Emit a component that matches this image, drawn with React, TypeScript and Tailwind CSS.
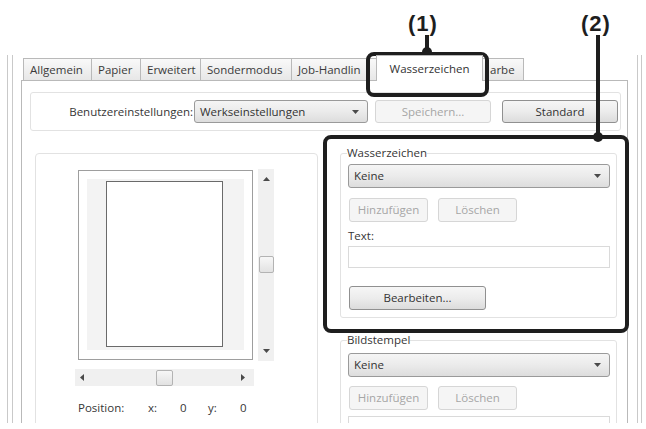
import React from "react";

function Arrow({ dir, className }: { dir: "up" | "down" | "left" | "right"; className?: string }) {
  const pts: Record<string, string> = {
    down: "0,0 7,0 3.5,4",
    up: "0,4 7,4 3.5,0",
    left: "4,0 4,7 0,3.5",
    right: "0,0 0,7 4,3.5",
  };
  const vertical = dir === "up" || dir === "down";
  return (
    <svg
      className={className}
      width={vertical ? 7 : 4}
      height={vertical ? 4 : 7}
      viewBox={vertical ? "0 0 7 4" : "0 0 4 7"}
    >
      <polygon points={pts[dir]} fill="#4a4a4a" />
    </svg>
  );
}

function Tab({ children, className }: { children: React.ReactNode; className: string }) {
  return (
    <div
      className={
        "h-[22px] -mr-px shrink-0 border border-b-0 border-[#b9b9b9] bg-linear-to-b from-[#f9f9f9] to-[#e7e7e7] flex items-center px-[6px] overflow-hidden whitespace-nowrap text-[#3a3a3a] " +
        className
      }
    >
      {children}
    </div>
  );
}

function Btn({ label, className, disabled }: { label: string; className: string; disabled?: boolean }) {
  return disabled ? (
    <div
      className={
        "shrink-0 flex items-center justify-center rounded-[3px] border border-[#d6d6d6] bg-[#f5f5f5] text-[#a6a6a6] " +
        className
      }
    >
      {label}
    </div>
  ) : (
    <div
      className={
        "shrink-0 flex items-center justify-center rounded-[3px] border border-[#909090] bg-linear-to-b from-[#f6f6f6] via-[#ececec] to-[#dcdcdc] text-[#333] " +
        className
      }
    >
      {label}
    </div>
  );
}

function Combo({ value, className }: { value: string; className: string }) {
  return (
    <div
      className={
        "shrink-0 flex items-center justify-between rounded-[3px] border border-[#9a9a9a] bg-linear-to-b from-[#f5f5f5] via-[#ebebeb] to-[#dddddd] pl-[5px] pr-[8px] text-[#333] " +
        className
      }
    >
      <span>{value}</span>
      <Arrow dir="down" />
    </div>
  );
}

export default function App() {
  return (
    <div className="relative w-[646px] h-[429px] bg-white overflow-hidden font-['Open_Sans','Noto_Sans',sans-serif] text-[11.5px] leading-[14px] text-[#363636]">
      <div className="h-[55px]" />
      {/* window frame */}
      <div className="ml-[7px] w-[635px] h-[368px] border-x border-[#c9c9c9] overflow-hidden">
        <div className="ml-[4px] w-[626px] h-full border-x border-[#c9c9c9] bg-white pl-[8px]">
          {/* tab control */}
          <div className="w-[607px]">
            <div className="flex items-end h-[25px] pl-[2px]">
              <Tab className="w-[69px]">Allgemein</Tab>
              <Tab className="w-[50px]">Papier</Tab>
              <Tab className="w-[61px]">Erweitert</Tab>
              <Tab className="w-[92px]">Sondermodus</Tab>
              <Tab className="w-[88px]">Job-Handlin</Tab>
              <div className="relative z-10 -ml-[2px] -mr-[3px] mb-[-1px] h-[26px] w-[107px] shrink-0 border border-b-0 border-[#b9b9b9] bg-white flex items-center justify-center text-[#333]">
                Wasserzeichen
              </div>
              <Tab className="w-[44px] pl-[9px]">arbe</Tab>
            </div>
            {/* pane */}
            <div className="border border-[#b9b9b9] bg-white h-[400px] px-[8px]">
              {/* Benutzereinstellungen group */}
              <div className="mt-[11px] h-[39px] w-[591px] rounded-[3px] border border-[#e2e2e2] pt-[7px] flex items-start">
                <div className="w-[163px] h-[23px] flex items-center justify-end pr-[1px]">
                  Benutzereinstellungen:
                </div>
                <Combo value="Werkseinstellungen" className="w-[174px] h-[23px]" />
                <Btn label="Speichern..." disabled className="ml-[7px] w-[116px] h-[23px]" />
                <Btn label="Standard" className="ml-[11px] w-[116px] h-[23px]" />
              </div>

              {/* main row */}
              <div className="mt-[16px] flex items-start">
                {/* preview box */}
                <div className="ml-[5px] mt-[6px] w-[283px] h-[300px] rounded-[4px] border border-[#e2e2e2] pt-[16px] pl-[42px]">
                  <div className="flex items-start">
                    <div className="w-[175px] h-[190px] border border-[#9e9e9e] pt-[8px] pl-[8px]">
                      <div className="w-[157px] h-[171px] bg-[#f3f3f3] pt-[2px] pl-[19px]">
                        <div className="w-[117px] h-[166px] border border-[#6a6a6a] bg-white" />
                      </div>
                    </div>
                    <div className="ml-[5px] -mt-px w-[16px] h-[192px] bg-[#f0f0f0] flex flex-col items-center">
                      <Arrow dir="up" className="mt-[8px]" />
                      <div className="mt-[75px] w-[15px] h-[17px] rounded-[2px] border border-[#b3b3b3] bg-linear-to-b from-[#f7f7f7] to-[#e2e2e2]" />
                      <Arrow dir="down" className="mt-[76px]" />
                    </div>
                  </div>
                  <div className="-ml-[3px] mt-[8px] w-[179px] h-[17px] bg-[#f0f0f0] flex items-center">
                    <Arrow dir="left" className="ml-[5px]" />
                    <div className="ml-[72px] w-[17px] h-[16px] rounded-[2px] border border-[#b3b3b3] bg-linear-to-b from-[#f7f7f7] to-[#e2e2e2]" />
                    <Arrow dir="right" className="ml-[68px]" />
                  </div>
                  <div className="mt-[15px] flex">
                    <span className="w-[70px]">Position:</span>
                    <span className="w-[32px]">x:</span>
                    <span className="w-[28px]">0</span>
                    <span className="w-[32px]">y:</span>
                    <span>0</span>
                  </div>
                </div>

                {/* right column */}
                <div className="ml-[22px] w-[277px]">
                  <fieldset className="rounded-[3px] border border-[#e2e2e2] px-[6px] pb-[7px]">
                    <legend className="leading-[12px]">Wasserzeichen</legend>
                    <Combo value="Keine" className="mt-[5px] ml-px w-[262px] h-[24px]" />
                    <div className="mt-[10px] flex">
                      <Btn label="Hinzufügen" disabled className="ml-[2px] w-[79px] h-[24px]" />
                      <Btn label="Löschen" disabled className="ml-[10px] w-[79px] h-[24px]" />
                    </div>
                    <div className="mt-[7px] ml-px">Text:</div>
                    <div className="mt-[3px] ml-px w-[262px] h-[22px] border border-[#dadada] bg-white" />
                    <Btn label="Bearbeiten..." className="mt-[18px] ml-[2px] w-[137px] h-[24px]" />
                  </fieldset>
                  <fieldset className="mt-[16px] rounded-[3px] border border-[#e2e2e2] px-[6px] pb-[7px] h-[120px]">
                    <legend className="leading-[12px]">Bildstempel</legend>
                    <Combo value="Keine" className="mt-[7px] ml-px w-[262px] h-[24px]" />
                    <div className="mt-[9px] flex">
                      <Btn label="Hinzufügen" disabled className="ml-[2px] w-[79px] h-[24px]" />
                      <Btn label="Löschen" disabled className="ml-[10px] w-[79px] h-[24px]" />
                    </div>
                    <div className="mt-[6px] ml-px w-[262px] h-[22px] border border-[#dadada] bg-white" />
                  </fieldset>
                </div>
              </div>
            </div>
          </div>
        </div>
      </div>

      {/* annotations */}
      <div className="absolute left-[408px] top-[12px] font-['Liberation_Sans',Arial,sans-serif] font-bold text-[22px] leading-[24px] tracking-[1px] text-[#1e1e1e]">
        (1)
      </div>
      <div className="absolute left-[581px] top-[12px] font-['Liberation_Sans',Arial,sans-serif] font-bold text-[22px] leading-[24px] tracking-[1px] text-[#1e1e1e]">
        (2)
      </div>
      <div className="absolute left-[425px] top-[35px] w-[4px] h-[18px] bg-[#1e1e1e]" />
      <div className="absolute left-[422px] top-[47px] w-[10px] h-[10px] rounded-full bg-[#1e1e1e]" />
      <div className="absolute left-[366px] top-[52px] w-[123px] h-[45px] rounded-[8px] border-[4px] border-[#1e1e1e]" />

      <div className="absolute left-[596px] top-[35px] w-[4px] h-[102px] bg-[#1e1e1e]" />
      <div className="absolute left-[593px] top-[132px] w-[10px] h-[10px] rounded-full bg-[#1e1e1e]" />
      <div className="absolute left-[323px] top-[135px] w-[306px] h-[198px] rounded-[8px] border-[4px] border-[#1e1e1e]" />
    </div>
  );
}
